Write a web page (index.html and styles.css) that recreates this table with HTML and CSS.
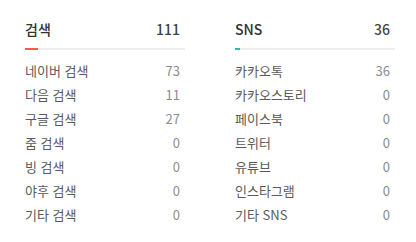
FILE: index.html
```html
<!DOCTYPE html>
<html lang="ko">
<head>
<meta charset="utf-8">
<link rel="stylesheet" href="styles.css">
</head>
<body>
<div class="wrap">
  <section class="col">
    <div class="head"><span class="title">검색</span><span class="total">111</span></div>
    <div class="bar"><div class="fill red" style="width:13px"></div></div>
    <ul class="list">
      <li><span>네이버 검색</span><span class="num">73</span></li>
      <li><span>다음 검색</span><span class="num">11</span></li>
      <li><span>구글 검색</span><span class="num">27</span></li>
      <li><span>줌 검색</span><span class="num">0</span></li>
      <li><span>빙 검색</span><span class="num">0</span></li>
      <li><span>야후 검색</span><span class="num">0</span></li>
      <li><span>기타 검색</span><span class="num">0</span></li>
    </ul>
  </section>
  <section class="col">
    <div class="head"><span class="title">SNS</span><span class="total">36</span></div>
    <div class="bar"><div class="fill teal" style="width:5px"></div></div>
    <ul class="list">
      <li><span>카카오톡</span><span class="num">36</span></li>
      <li><span>카카오스토리</span><span class="num">0</span></li>
      <li><span>페이스북</span><span class="num">0</span></li>
      <li><span>트위터</span><span class="num">0</span></li>
      <li><span>유튜브</span><span class="num">0</span></li>
      <li><span>인스타그램</span><span class="num">0</span></li>
      <li><span>기타 SNS</span><span class="num">0</span></li>
    </ul>
  </section>
</div>
</body>
</html>
```
FILE: styles.css
```css
* { box-sizing: border-box; }
html, body { margin: 0; padding: 0; background: #fff; }
body {
  font-family: "Noto Sans CJK KR", "Noto Sans", sans-serif;
  color: #555;
}
.wrap {
  display: flex;
  gap: 50px;
  padding: 18px 0 0 25px;
}
.col { width: 160px; }
.head {
  display: flex;
  justify-content: space-between;
  align-items: center;
  height: 22px;
  line-height: 22px;
  padding-right: 5px;
  font-size: 14px;
  font-weight: 500;
  color: #333;
}
.total { font-weight: 500; color: #444; }
.bar {
  margin-top: 8px;
  height: 2px;
  background: #eeeeee;
}
.fill { height: 2px; }
.red { background: #f05a4a; }
.teal { background: #1ec4a8; }
.list {
  list-style: none;
  margin: 9px 0 0;
  padding: 0;
}
.list li {
  display: flex;
  justify-content: space-between;
  height: 24px;
  line-height: 24px;
  padding-right: 5px;
  font-size: 13px;
  color: #5a5a5a;
}
.num { color: #8c8c8c; }
```
